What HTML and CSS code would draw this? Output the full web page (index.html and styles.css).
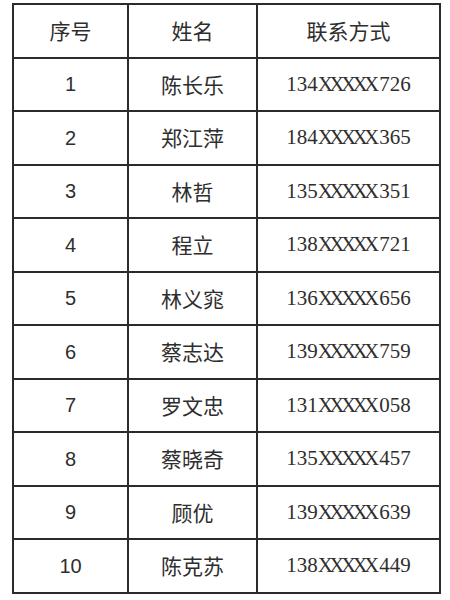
FILE: index.html
```html
<!DOCTYPE html>
<html lang="zh">
<head>
<meta charset="utf-8">
<link rel="stylesheet" href="styles.css">
</head>
<body>
<table class="contacts">
  <colgroup>
    <col class="c-no">
    <col class="c-name">
    <col class="c-tel">
  </colgroup>
  <thead>
    <tr><th>序号</th><th>姓名</th><th>联系方式</th></tr>
  </thead>
  <tbody>
    <tr><td class="no">1</td><td>陈长乐</td><td class="tel">134<span class="mask">XXXXX</span>726</td></tr>
    <tr><td class="no">2</td><td>郑江萍</td><td class="tel">184<span class="mask">XXXXX</span>365</td></tr>
    <tr><td class="no">3</td><td>林哲</td><td class="tel">135<span class="mask">XXXXX</span>351</td></tr>
    <tr><td class="no">4</td><td>程立</td><td class="tel">138<span class="mask">XXXXX</span>721</td></tr>
    <tr><td class="no">5</td><td>林义窕</td><td class="tel">136<span class="mask">XXXXX</span>656</td></tr>
    <tr><td class="no">6</td><td>蔡志达</td><td class="tel">139<span class="mask">XXXXX</span>759</td></tr>
    <tr><td class="no">7</td><td>罗文忠</td><td class="tel">131<span class="mask">XXXXX</span>058</td></tr>
    <tr><td class="no">8</td><td>蔡晓奇</td><td class="tel">135<span class="mask">XXXXX</span>457</td></tr>
    <tr><td class="no">9</td><td>顾优</td><td class="tel">139<span class="mask">XXXXX</span>639</td></tr>
    <tr><td class="no">10</td><td>陈克苏</td><td class="tel">138<span class="mask">XXXXX</span>449</td></tr>
  </tbody>
</table>
</body>
</html>
```
FILE: styles.css
```css
html, body {
  margin: 0;
  padding: 0;
  background: #ffffff;
}
body {
  padding: 3px 0 0 12px;
  font-family: "Noto Sans CJK SC", "Noto Sans", sans-serif;
  color: #2e2e2e;
}
.contacts {
  border-collapse: collapse;
  table-layout: fixed;
  width: 427px;
}
.c-no { width: 115px; }
.c-name { width: 129px; }
.c-tel { width: 183px; }
.contacts th,
.contacts td {
  border: 2px solid #2b2b2b;
  height: 51.5px;
  padding: 0;
  text-align: center;
  vertical-align: middle;
  font-size: 21px;
  font-weight: normal;
  line-height: 1;
}
.contacts td.no {
  font-family: "Liberation Sans", Arial, sans-serif;
  font-size: 20px;
}
.contacts td.tel {
  font-family: "Liberation Serif", "Times New Roman", serif;
  font-size: 21px;
}
.tel .mask {
  letter-spacing: -3.6px;
  margin-right: 3.6px;
}
```
